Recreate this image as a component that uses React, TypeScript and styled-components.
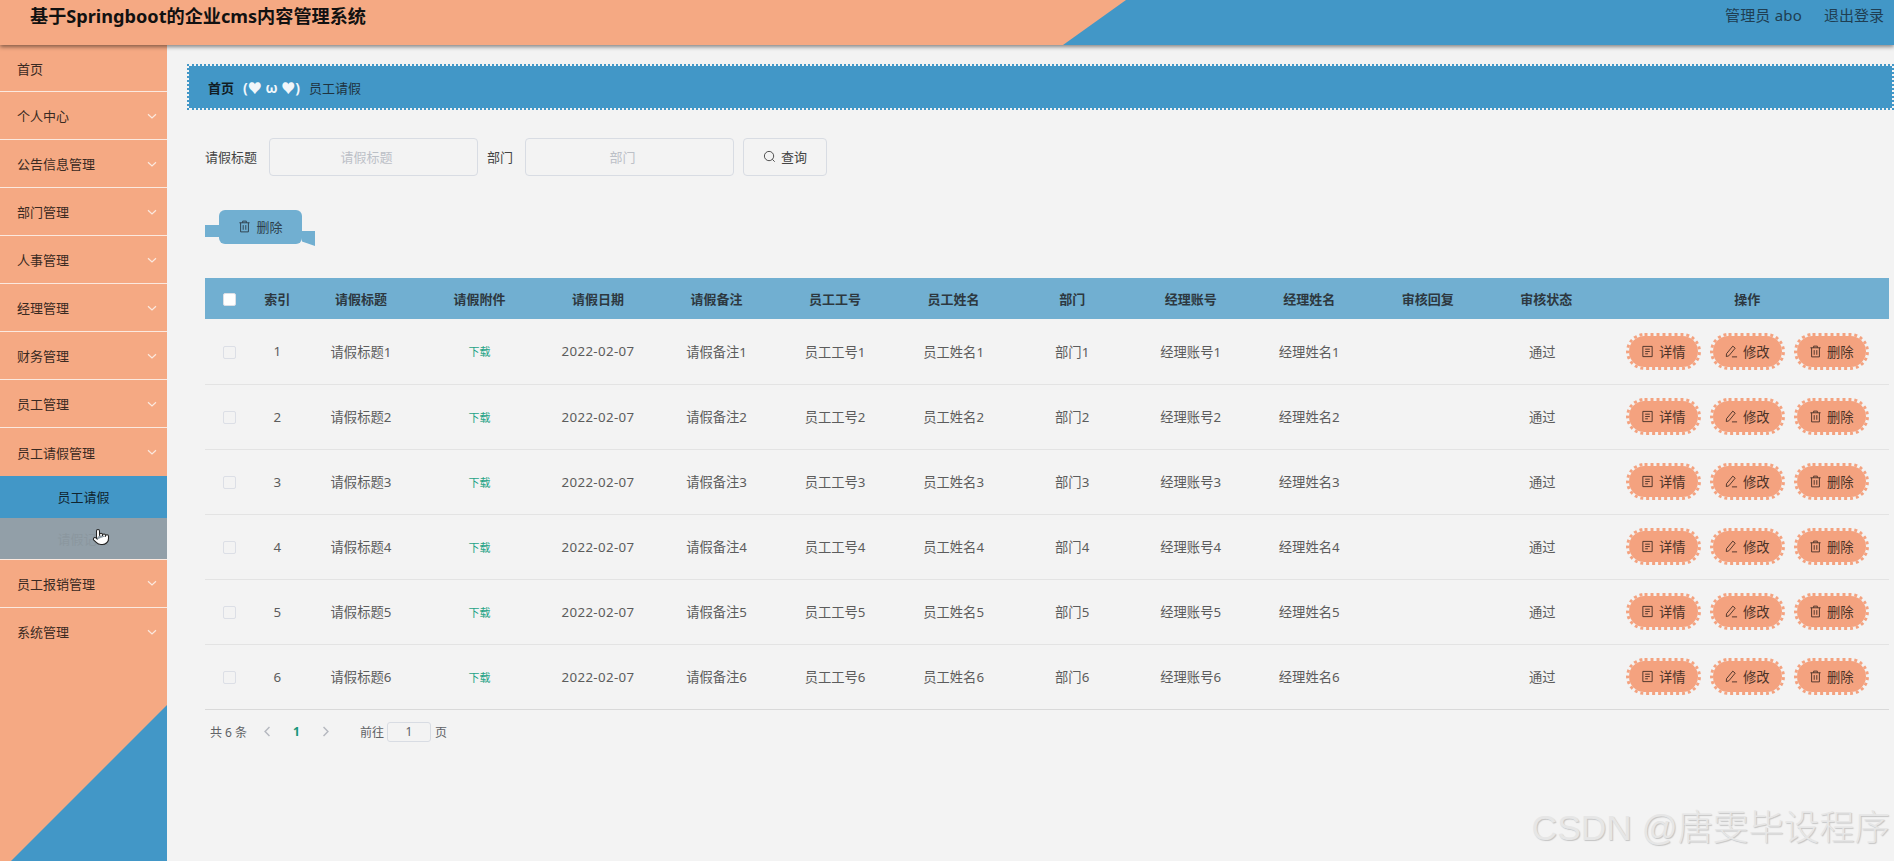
import React from 'react';
import styled, { createGlobalStyle } from 'styled-components';
import { Pointer } from 'lucide-react';

const GlobalStyles = createGlobalStyle`
html, body {
  margin: 0;
  padding: 0;
  width: 100%;
  height: 100%;
  overflow: hidden;
  background: #f3f3f3;
  font-family: "Noto Sans", "Noto Sans CJK SC", sans-serif;
  font-size: 13px;
  color: #333;
}
* { box-sizing: border-box; }
`;

const Page = styled.div`
  position: relative;
  width: 1894px;
  height: 861px;
  display: flex;
  flex-direction: column;
  overflow: hidden;
`;

const Header = styled.header`
  position: relative;
  z-index: 2;
  flex: none;
  height: 45px;
  padding: 0 10px 0 30px;
  display: flex;
  align-items: flex-start;
  justify-content: space-between;
  background: #f5a983;
  box-shadow: 0 2px 4px rgba(0, 0, 0, 0.45);
  &::before {
    content: '';
    position: absolute;
    inset: 0;
    background: #4297c7;
    clip-path: polygon(1063px 100%, 1126px 0, 100% 0, 100% 100%);
  }
`;

const Title = styled.div`
  position: relative;
  font-size: 18.15px;
  font-weight: 700;
  line-height: 32px;
  color: #111;
`;

const UserBar = styled.div`
  position: relative;
  display: flex;
  gap: 22px;
  font-size: 15px;
  line-height: 30px;
  color: #1f3e52;
`;

const UserName = styled.span`
  letter-spacing: 0.2px;
`;

const Body = styled.div`
  flex: 1;
  display: flex;
  min-height: 0;
`;

const Sidebar = styled.aside`
  position: relative;
  flex: none;
  width: 167px;
  background: #f5a983;
  &::after {
    content: '';
    position: absolute;
    right: 0;
    bottom: 0;
    width: 156px;
    height: 156px;
    background: #4297c7;
    clip-path: polygon(100% 0, 100% 100%, 0 100%);
  }
`;

const MenuItem = styled.div`
  height: 48px;
  padding: 0 10px 0 17px;
  display: flex;
  align-items: center;
  justify-content: space-between;
  border-bottom: 1.5px solid #fbe9df;
  font-size: 13px;
  color: #3a2a22;
`;

const FirstItem = styled(MenuItem)`
  height: 47px;
`;

const OpenItem = styled(MenuItem)`
  border-bottom: 0;
`;

const Chevron = styled.svg`
  width: 10px;
  height: 10px;
  fill: none;
  stroke: #fbe9df;
  stroke-width: 1.2;
`;

const SubItem = styled.div<{ $active?: boolean }>`
  height: 41.5px;
  display: flex;
  align-items: center;
  justify-content: center;
  background: ${(p) => (p.$active ? '#4297c7' : '#929fa8')};
  color: ${(p) => (p.$active ? '#10242f' : '#8b979f')};
  font-size: 13px;
`;

const HoverItem = styled(SubItem)`
  position: relative;
  height: 42px;
  border-bottom: 1.5px solid #fbe9df;
`;

const Cursor = styled(Pointer)`
  position: absolute;
  left: 92px;
  top: 9px;
  width: 18px;
  height: 20px;
  fill: #fff;
  color: #222;
`;

const Main = styled.main`
  flex: 1;
  min-width: 0;
  padding: 19px 0 0 20px;
`;

const Breadcrumb = styled.div`
  height: 46px;
  padding: 0 19px;
  display: flex;
  align-items: center;
  gap: 9px;
  background: #4297c7;
  background-clip: padding-box;
  border: 2px dotted #4297c7;
  font-size: 13px;
  color: #1f3340;
`;

const CrumbRoot = styled.b`
  color: #111d25;
`;

const CrumbSep = styled.b`
  font-size: 14px;
  color: #f1f6fa;
`;

const Content = styled.div`
  padding: 28px 5px 0 18px;
`;

const SearchRow = styled.div`
  height: 38px;
  display: flex;
  align-items: center;
`;

const FieldLabel = styled.label`
  width: 64px;
  padding-bottom: 1px;
  color: #444;
`;

const ShortLabel = styled(FieldLabel)`
  width: 38px;
`;

const TextInput = styled.div`
  width: 209px;
  height: 38px;
  margin-right: 9px;
  padding: 0 14px 2px 0;
  border: 1px solid #d8dce3;
  border-radius: 4px;
  display: flex;
  align-items: center;
  justify-content: center;
  color: #bcc0c7;
`;

const SearchButton = styled.button`
  width: 84px;
  height: 38px;
  display: flex;
  align-items: center;
  justify-content: center;
  gap: 5px;
  padding: 0 0 2px;
  background: transparent;
  border: 1px solid #d8dce3;
  border-radius: 4px;
  font: inherit;
  color: #444;
`;

const RibbonRow = styled.div`
  margin-top: 34px;
  padding-left: 14px;
`;

const RibbonButton = styled.button`
  position: relative;
  width: 83px;
  height: 34px;
  display: flex;
  align-items: center;
  justify-content: center;
  gap: 5px;
  padding: 0 0 2px;
  background: #71afd1;
  border: 0;
  border-radius: 6px;
  font: inherit;
  color: #2c3e4a;
  &::before {
    content: '';
    position: absolute;
    left: -14px;
    top: 15px;
    width: 14px;
    height: 12px;
    background: #71afd1;
  }
  &::after {
    content: '';
    position: absolute;
    right: -13px;
    top: 21px;
    width: 13px;
    height: 15px;
    background: #71afd1;
    clip-path: polygon(0 0, 100% 0, 100% 100%, 0 70%);
  }
`;

const Table = styled.table`
  width: 1684px;
  margin-top: 34px;
  border-collapse: collapse;
  table-layout: fixed;
`;

const HeadCell = styled.th`
  height: 41px;
  padding: 0;
  background: #71afd1;
  font-size: 13px;
  font-weight: 700;
  color: #2d3840;
  text-align: center;
`;

const BodyCell = styled.td`
  height: 65px;
  padding: 0;
  border-bottom: 1px solid #e3e3e3;
  font-size: 13.3px;
  color: #5c5c5c;
  text-align: center;
`;

const LastBodyCell = styled(BodyCell)`
  border-bottom-color: #d9d9d9;
`;

const Check = styled.span<{ $head?: boolean }>`
  display: inline-block;
  vertical-align: middle;
  width: 13px;
  height: 13px;
  border: 1px solid #dcdfe6;
  border-radius: 2px;
  background: ${(p) => (p.$head ? '#fff' : 'transparent')};
`;

const DownloadLink = styled.span`
  font-size: 11px;
  color: #1fa386;
`;

const DateText = styled.span`
  letter-spacing: 0.35px;
`;

const StatusText = styled.span`
  margin-right: 8px;
`;

const Actions = styled.div`
  display: flex;
  justify-content: center;
  gap: 9px;
`;

const ActionButton = styled.button`
  width: 75px;
  height: 37px;
  display: flex;
  align-items: center;
  justify-content: center;
  gap: 5px;
  padding: 0;
  background: #f4a27f;
  background-clip: padding-box;
  border: 3px dotted #f4a27f;
  border-radius: 20px;
  font: inherit;
  color: #4b3228;
`;

const Pager = styled.div`
  margin-top: 12px;
  height: 20px;
  display: flex;
  align-items: center;
  padding-left: 5px;
  font-size: 12px;
  color: #606266;
`;

const PagerTotal = styled.span`
  width: 52px;
`;

const PagerArrow = styled.svg`
  width: 11px;
  height: 11px;
  fill: none;
  stroke: #b5b8bf;
  stroke-width: 1.3;
`;

const PagerPage = styled.b`
  width: 47px;
  text-align: center;
  color: #17967a;
`;

const PagerJump = styled.span`
  margin-left: 29px;
`;

const PagerInput = styled.span`
  width: 44px;
  height: 20px;
  margin: 0 4px 0 3px;
  display: flex;
  align-items: center;
  justify-content: center;
  border: 1px solid #d8dce3;
  border-radius: 3px;
`;

const Watermark = styled.div`
  position: absolute;
  right: 4px;
  bottom: 13px;
  font-size: 35.4px;
  font-weight: 300;
  line-height: 40px;
  font-family: "Liberation Sans", "Noto Sans CJK SC", sans-serif;
  color: #e6e6e6;
  text-shadow: 1px 1px 1px #c4c4c4;
`;

const Icon = styled.svg`
  width: 13px;
  height: 13px;
  fill: none;
  stroke: currentColor;
  stroke-width: 1;
  flex: none;
`;

const TrashIcon = () => (
  <Icon viewBox="0 0 14 14">
    <path d="M1.5 3h11M5 3V1.2h4V3M2.8 3v9.8h8.4V3M5.6 5.5v5M8.4 5.5v5" />
  </Icon>
);

const TicketIcon = () => (
  <Icon viewBox="0 0 14 14">
    <path d="M2 1.5h10v11H2zM4.5 4.5h5M4.5 7h5M4.5 9.5h3" />
  </Icon>
);

const EditIcon = () => (
  <Icon viewBox="0 0 14 14">
    <path d="M1.6 9.4 8.4 1.2l2.6 2.2-6.8 8.2-2.8.9zM7.5 12.8h5.5" />
  </Icon>
);

const SearchIcon = () => (
  <Icon viewBox="0 0 14 14">
    <circle cx="6.5" cy="6.5" r="5" />
    <path d="m10 10 2.6 2.6" />
  </Icon>
);

const ChevronDown = () => (
  <Chevron viewBox="0 0 10 10">
    <path d="M1 3.2 5 7l4-3.8" />
  </Chevron>
);

const menus = ['个人中心', '公告信息管理', '部门管理', '人事管理', '经理管理', '财务管理', '员工管理'];
const widths = [48, 48.6, ...Array(11).fill(118.4), 283];
const heads = ['索引', '请假标题', '请假附件', '请假日期', '请假备注', '员工工号', '员工姓名', '部门', '经理账号', '经理姓名', '审核回复', '审核状态', '操作'];
const rows = [1, 2, 3, 4, 5, 6];

export default function App() {
  return (
    <Page>
      <GlobalStyles />
      <Header>
        <Title>基于Springboot的企业cms内容管理系统</Title>
        <UserBar>
          <UserName>管理员 abo</UserName>
          <span>退出登录</span>
        </UserBar>
      </Header>
      <Body>
        <Sidebar>
          <FirstItem>首页</FirstItem>
          {menus.map((m) => (
            <MenuItem key={m}>
              {m}
              <ChevronDown />
            </MenuItem>
          ))}
          <OpenItem>
            员工请假管理
            <ChevronDown />
          </OpenItem>
          <SubItem $active>员工请假</SubItem>
          <HoverItem>
            请假记录
            <Cursor strokeWidth={1.4} />
          </HoverItem>
          <MenuItem>
            员工报销管理
            <ChevronDown />
          </MenuItem>
          <OpenItem>
            系统管理
            <ChevronDown />
          </OpenItem>
        </Sidebar>
        <Main>
          <Breadcrumb>
            <CrumbRoot>首页</CrumbRoot>
            <CrumbSep>(♥ ω ♥)</CrumbSep>
            <span>员工请假</span>
          </Breadcrumb>
          <Content>
            <SearchRow>
              <FieldLabel>请假标题</FieldLabel>
              <TextInput>请假标题</TextInput>
              <ShortLabel>部门</ShortLabel>
              <TextInput>部门</TextInput>
              <SearchButton>
                <SearchIcon />
                查询
              </SearchButton>
            </SearchRow>
            <RibbonRow>
              <RibbonButton>
                <TrashIcon />
                删除
              </RibbonButton>
            </RibbonRow>
            <Table>
              <colgroup>
                {widths.map((w, i) => (
                  <col key={i} width={w} />
                ))}
              </colgroup>
              <thead>
                <tr>
                  <HeadCell>
                    <Check $head />
                  </HeadCell>
                  {heads.map((h) => (
                    <HeadCell key={h}>{h}</HeadCell>
                  ))}
                </tr>
              </thead>
              <tbody>
                {rows.map((n) => {
                  const Cell = n === 6 ? LastBodyCell : BodyCell;
                  return (
                    <tr key={n}>
                      <Cell>
                        <Check />
                      </Cell>
                      <Cell>{n}</Cell>
                      <Cell>请假标题{n}</Cell>
                      <Cell>
                        <DownloadLink>下载</DownloadLink>
                      </Cell>
                      <Cell>
                        <DateText>2022-02-07</DateText>
                      </Cell>
                      <Cell>请假备注{n}</Cell>
                      <Cell>员工工号{n}</Cell>
                      <Cell>员工姓名{n}</Cell>
                      <Cell>部门{n}</Cell>
                      <Cell>经理账号{n}</Cell>
                      <Cell>经理姓名{n}</Cell>
                      <Cell />
                      <Cell>
                        <StatusText>通过</StatusText>
                      </Cell>
                      <Cell>
                        <Actions>
                          <ActionButton>
                            <TicketIcon />
                            详情
                          </ActionButton>
                          <ActionButton>
                            <EditIcon />
                            修改
                          </ActionButton>
                          <ActionButton>
                            <TrashIcon />
                            删除
                          </ActionButton>
                        </Actions>
                      </Cell>
                    </tr>
                  );
                })}
              </tbody>
            </Table>
            <Pager>
              <PagerTotal>共 6 条</PagerTotal>
              <PagerArrow viewBox="0 0 10 10">
                <path d="M6.8 1 2.8 5l4 4" />
              </PagerArrow>
              <PagerPage>1</PagerPage>
              <PagerArrow viewBox="0 0 10 10">
                <path d="M3.2 1l4 4-4 4" />
              </PagerArrow>
              <PagerJump>前往</PagerJump>
              <PagerInput>1</PagerInput>
              <span>页</span>
            </Pager>
          </Content>
        </Main>
      </Body>
      <Watermark>CSDN @唐雯毕设程序</Watermark>
    </Page>
  );
}
